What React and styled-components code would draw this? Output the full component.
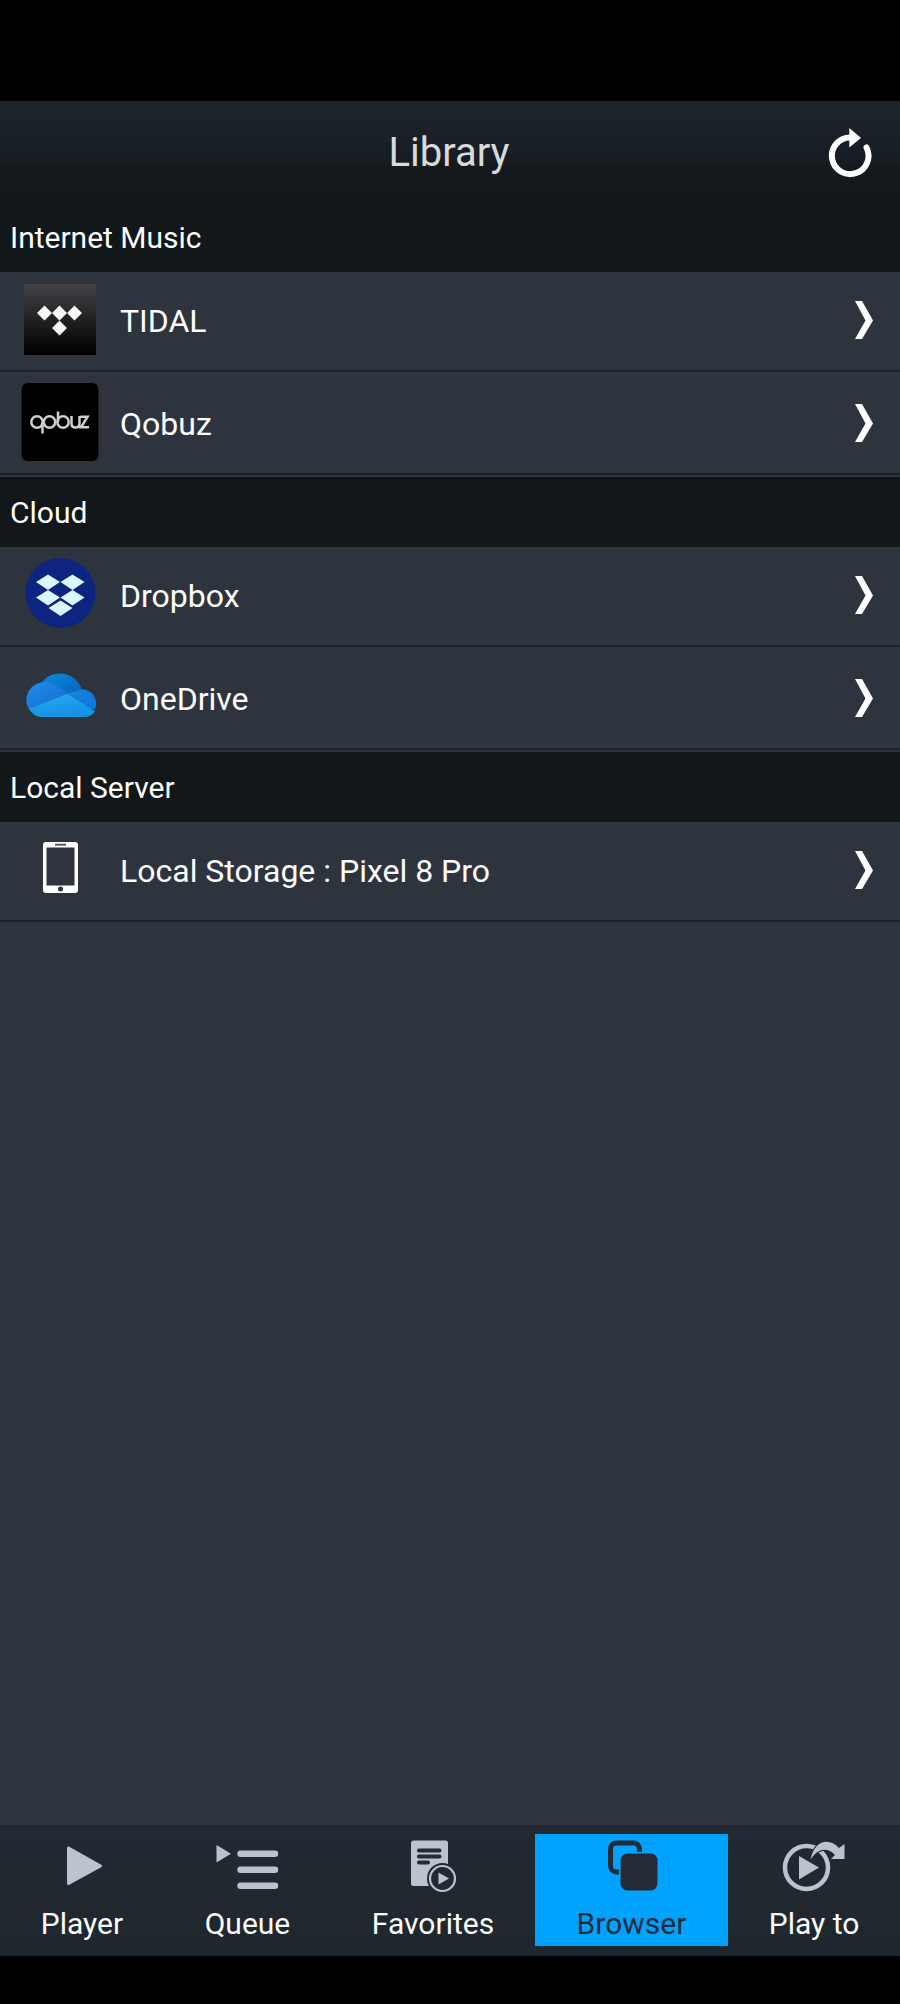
import React from 'react';
import styled, { createGlobalStyle, css } from 'styled-components';

const theme = {
  colors: {
    base: '#2e343e',
    dark: '#12171a',
    white: '#fcfcfc',
    title: '#dadada',
    icon: '#bcc3ce',
    ink: '#242b35',
    accent: '#00a2ff',
  },
  font: `Roboto, 'Liberation Sans', sans-serif`,
};

const GlobalStyle = createGlobalStyle`
  * {
    box-sizing: border-box;
  }
  body {
    margin: 0;
    background: #000;
    font-family: ${theme.font};
  }
  svg {
    display: block;
    flex-shrink: 0;
  }
`;

const Screen = styled.div`
  display: flex;
  flex-direction: column;
  width: 900px;
  height: 2004px;
  padding: 101px 0 48px;
  background: #000;
`;
const Header = styled.header`
  display: grid;
  grid-template-columns: 100px 1fr 100px;
  align-items: center;
  height: 101px;
  padding: 2px 0 0;
  background: linear-gradient(#1e262d 0, #161d24 58px, #161a1d 64px, ${theme.colors.dark} 100%);
`;
const Title = styled.h1`
  grid-column: 2;
  margin: 0;
  padding-right: 52px;
  color: ${theme.colors.title};
  font-size: 40px;
  font-weight: 400;
  line-height: 48px;
  text-align: center;
  transform: translateX(25px);
`;
const RefreshButton = styled.button`
  display: flex;
  justify-content: flex-end;
  padding: 0 28px 0 0;
  border: 0;
  background: none;
`;
const Library = styled.main`
  flex: 1;
  background: ${theme.colors.base};
`;
const SectionTitle = styled.h2`
  height: 70px;
  margin: 0;
  padding-left: 10px;
  background: ${theme.colors.dark};
  color: ${theme.colors.white};
  font-size: 30px;
  font-weight: 400;
  line-height: 72px;
`;
const List = styled.ul`
  display: flex;
  flex-direction: column;
  gap: 2px;
  margin: 0;
  padding: 0 0 2px;
  list-style: none;
`;
const Row = styled.li`
  display: grid;
  grid-template-columns: 120px 1fr auto;
  align-items: center;
  height: ${props => (props.$last ? 101 : 100)}px;
  padding-right: 26px;
  border-bottom: 2px solid #1b212a;
`;
const Thumb = styled.div`
  display: flex;
  justify-content: center;
  width: 120px;
`;
const Label = styled.span`
  color: ${theme.colors.white};
  font-size: 32px;
  line-height: 40px;
`;
const NavBar = styled.nav`
  display: flex;
  height: 131px;
  padding: 9px 0 10px;
  background: linear-gradient(#222932, #1f272e);
`;
const Tab = styled.a`
  display: flex;
  flex-direction: column;
  align-items: center;
  width: ${props => props.$width}px;
  color: ${theme.colors.icon};
  ${props =>
    props.$active &&
    css`
      background: ${theme.colors.accent};
      color: ${theme.colors.ink};
    `};
`;
const TabLabel = styled.span`
  margin-top: 4px;
  color: ${props => (props.$active ? theme.colors.ink : theme.colors.white)};
  font-size: 30px;
  line-height: 36px;
  white-space: nowrap;
`;

const RefreshIcon = () => (
  <svg width="44" height="50" viewBox="0 0 44 50">
    <path
      d="M22 9.5A18.3 18.3 0 1 0 38.5 19.5"
      fill="none"
      stroke="#fff"
      strokeWidth="6"
      strokeLinecap="round"
    />
    <path d="M21.3 0 33 10 21.3 19.500z" fill="#fff" />
  </svg>
);

const Chevron = () => (
  <svg width="20" height="40" viewBox="0 0 20 40">
    <path d="M1 0h7l11 19.500L8 38H1l10.500-18.500z" fill="#fff" />
  </svg>
);

const TidalIcon = () => (
  <svg width="78" height="98" viewBox="0 0 78 98">
    <defs>
      <linearGradient id="tidal" x2="0" y2="1">
        <stop offset="0" stopColor="#434347" />
        <stop offset="0.9" stopColor="#060606" />
        <stop offset="1" stopColor="#000" />
      </linearGradient>
    </defs>
    <path d="M3 12h72v71H3z" fill="url(#tidal)" />
    <path
      d="m23.500 33.500 7.500 7.500-7.500 7.500L16 41zm15 0L46 41l-7.500 7.500L31 41zm15 0L61 41l-7.500 7.500L46 41zm-15 15L46 56l-7.500 7.500L31 56z"
      fill="#f6f6f7"
    />
  </svg>
);

const QobuzIcon = () => (
  <svg width="78" height="98" viewBox="0 0 78 98">
    <rect x="0.500" y="8" width="77" height="78" rx="6" fill="#000" />
    <g fill="none" stroke="#cfcfcf" strokeWidth="2.500">
      <circle cx="16" cy="47" r="5.700" />
      <path d="M21.500 47v11.500" />
      <circle cx="28.500" cy="47" r="5.700" />
      <circle cx="42" cy="47" r="5.700" />
      <path d="M37 36.500V47M50.500 41v7.500q0 4 4 4t4-4V41M59.500 41.800h7l-6.500 10.500h8" />
    </g>
  </svg>
);

const DropboxIcon = () => (
  <svg width="78" height="98" viewBox="0 0 78 98">
    <circle cx="39.500" cy="46" r="35" fill="#0d2481" />
    <path
      d="m27 27.500 12 7.500-12 8-12-8zm24.500 0 12 7.500-12 8-12-8zM27 43l12 7.500-12 8-12-8zm24.500 0 12 7.500-12 8-12-8zM39.500 53.500l12 7.500-12 8-12-8z"
      fill="#dcf6ff"
    />
  </svg>
);

const OneDriveIcon = () => (
  <svg width="78" height="98" viewBox="0 0 78 98">
    <defs>
      <linearGradient id="od-top" x2="1" y2="1">
        <stop offset="0" stopColor="#0a8ad8" />
        <stop offset="1" stopColor="#0562b8" />
      </linearGradient>
      <linearGradient id="od-left" x2="1" y2="1">
        <stop offset="0" stopColor="#1e8ee8" />
        <stop offset="1" stopColor="#1569cf" />
      </linearGradient>
      <linearGradient id="od-right" x2="1" y2="1">
        <stop offset="0" stopColor="#1c86dc" />
        <stop offset="1" stopColor="#0875d8" />
      </linearGradient>
      <linearGradient id="od-front" x2="0.400" y2="1">
        <stop offset="0" stopColor="#2aa9ea" />
        <stop offset="1" stopColor="#1492e6" />
      </linearGradient>
    </defs>
    <path d="M20 34C28 19 54 19 61 40L47 48 20 34z" fill="url(#od-top)" />
    <path d="M8 59C-1 45 14 26 32 34L48 44 24 57z" fill="url(#od-left)" />
    <path d="m46 44 14-4.500c11-1 18 10 14 20L60 57z" fill="url(#od-right)" />
    <path d="M8 59 46 44l28 17c-2 4-6 6-12 6H20q-8-1-12-8z" fill="url(#od-front)" />
  </svg>
);

const PhoneIcon = () => (
  <svg width="78" height="98" viewBox="0 0 78 98">
    <path
      d="M25 20h29q3 0 3 3v45q0 3-3 3H25q-3 0-3-3V23q0-3 3-3zm.500 5.500v38h28v-38z"
      fill="#fff"
      fillRule="evenodd"
    />
    <path d="M34 22.700h11" stroke="#555a62" strokeWidth="2" />
    <circle cx="39.500" cy="67" r="2.500" fill={theme.colors.base} />
  </svg>
);

const PlayerIcon = () => (
  <svg width="80" height="68" viewBox="0 0 80 68">
    <path
      d="M26.500 14v35.500L58.500 32z"
      fill="currentColor"
      stroke="currentColor"
      strokeWidth="3"
      strokeLinejoin="round"
    />
  </svg>
);

const QueueIcon = () => (
  <svg width="80" height="68" viewBox="0 0 80 68">
    <path d="M8.500 11v17.500L23 19.700z" fill="currentColor" />
    <path
      d="M32.500 19.700h34.500M32.500 35.700h34.500M32.500 51.700h34.500"
      stroke="currentColor"
      strokeWidth="6.400"
      strokeLinecap="round"
    />
  </svg>
);

const FavoritesIcon = () => (
  <svg width="80" height="68" viewBox="0 0 80 68">
    <rect x="18" y="6.500" width="37" height="45.500" rx="2.500" fill="currentColor" />
    <path
      d="M26 16.500h20.500M26 22.500h20.500M26 28.500h9"
      stroke={theme.colors.ink}
      strokeWidth="4"
      strokeLinecap="round"
    />
    <circle cx="49.500" cy="44.500" r="15.500" fill="#222932" />
    <circle cx="49.500" cy="44.500" r="12.500" fill="none" stroke="currentColor" strokeWidth="2.200" />
    <path d="M45.500 38.500v12l10.500-6z" fill="currentColor" />
  </svg>
);

const BrowserIcon = () => (
  <svg width="80" height="68" viewBox="0 0 80 68">
    <rect x="18.500" y="9" width="29" height="29" rx="6" fill="none" stroke="currentColor" strokeWidth="5" />
    <rect x="27" y="18" width="40" height="40" rx="8" fill={theme.colors.accent} />
    <rect x="28.500" y="19.500" width="37" height="37" rx="7" fill="currentColor" />
  </svg>
);

const PlayToIcon = () => (
  <svg width="80" height="68" viewBox="0 0 80 68">
    <circle cx="32.500" cy="33.500" r="21.500" fill="none" stroke="currentColor" strokeWidth="4.500" />
    <path d="M25 22v23.500l20-12z" fill="currentColor" />
    <path
      d="M36.500 26C40 6 55 3 65 14l5.500-4v15H57l4-4C54 13 43 14 36.500 26z"
      fill="currentColor"
      stroke="#222932"
      strokeWidth="2"
      paintOrder="stroke"
    />
  </svg>
);

const sections = [
  {
    title: 'Internet Music',
    items: [
      { label: 'TIDAL', Icon: TidalIcon },
      { label: 'Qobuz', Icon: QobuzIcon },
    ],
  },
  {
    title: 'Cloud',
    items: [
      { label: 'Dropbox', Icon: DropboxIcon },
      { label: 'OneDrive', Icon: OneDriveIcon },
    ],
  },
  {
    title: 'Local Server',
    items: [{ label: 'Local Storage : Pixel 8 Pro', Icon: PhoneIcon }],
  },
];

const tabs = [
  { label: 'Player', Icon: PlayerIcon, width: 164 },
  { label: 'Queue', Icon: QueueIcon, width: 167 },
  { label: 'Favorites', Icon: FavoritesIcon, width: 204 },
  { label: 'Browser', Icon: BrowserIcon, width: 193, active: true },
  { label: 'Play to', Icon: PlayToIcon, width: 172 },
];

const App = () => (
  <Screen>
    <GlobalStyle />
    <Header>
      <Title>Library</Title>
      <RefreshButton aria-label="Refresh">
        <RefreshIcon />
      </RefreshButton>
    </Header>
    <Library>
      {sections.map(({ title, items }) => (
        <section key={title}>
          <SectionTitle>{title}</SectionTitle>
          <List>
            {items.map(({ label, Icon }, i) => (
              <Row key={label} $last={i === 1}>
                <Thumb>
                  <Icon />
                </Thumb>
                <Label>{label}</Label>
                <Chevron />
              </Row>
            ))}
          </List>
        </section>
      ))}
    </Library>
    <NavBar>
      {tabs.map(({ label, Icon, width, active }) => (
        <Tab key={label} $width={width} $active={active}>
          <Icon />
          <TabLabel $active={active}>{label}</TabLabel>
        </Tab>
      ))}
    </NavBar>
  </Screen>
);

export default App;
